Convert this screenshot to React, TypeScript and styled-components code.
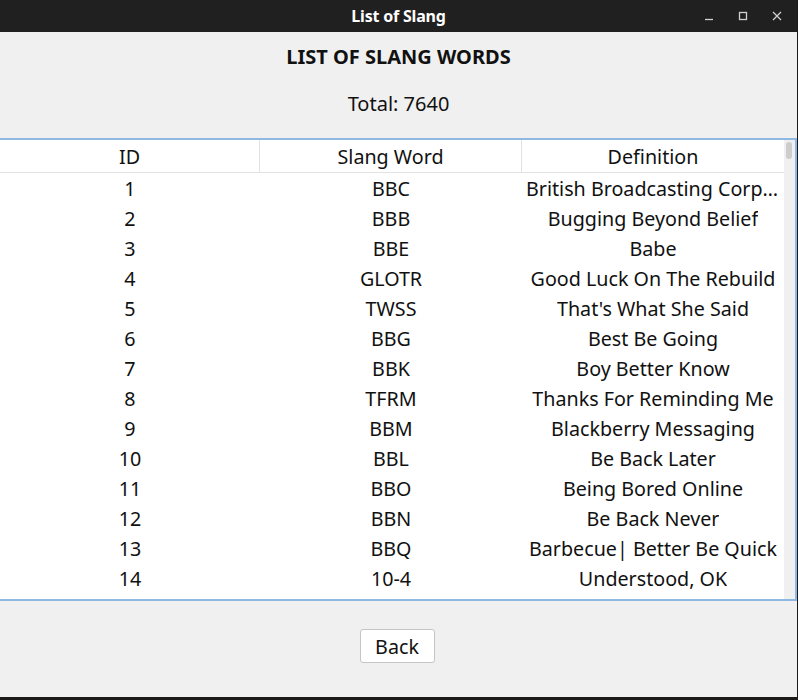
import React from "react";
import styled, { createGlobalStyle } from "styled-components";

const Global = createGlobalStyle`
  html, body { margin: 0; padding: 0; background: #1c1a18; }
  body { font-family: "Noto Sans", "Open Sans", sans-serif; }
`;

const Window = styled.div`
  width: 797px;
  height: 697px;
  display: flex;
  flex-direction: column;
  background: #f0f0f0;
  overflow: hidden;
`;

const TitleBar = styled.div`
  height: 32px;
  flex: none;
  background: #202020;
  display: flex;
  align-items: center;
  justify-content: center;
  position: relative;
`;

const TitleText = styled.div`
  color: #ffffff;
  font-family: "Noto Sans", sans-serif;
  font-weight: 700;
  font-size: 16px;
  letter-spacing: -0.2px;
`;

const Controls = styled.div`
  position: absolute;
  right: 14px;
  top: 0;
  height: 32px;
  display: flex;
  align-items: center;
  gap: 22px;
`;

const Ctl = styled.svg`
  width: 12px;
  height: 12px;
  stroke: #cfcfcf;
  stroke-width: 1.3;
  fill: none;
`;

const Heading = styled.h1`
  margin: 12px 0 0;
  text-align: center;
  font-size: 20px;
  font-weight: 700;
  color: #111;
  line-height: 26px;
`;

const Total = styled.div`
  margin-top: 21px;
  text-align: center;
  font-size: 20px;
  color: #111;
  line-height: 26px;
`;

const Frame = styled.div`
  margin-top: 21px;
  height: 459px;
  border: 2px solid #8fb8e3;
  border-left: none;
  background: #fff;
  display: flex;
  overflow: hidden;
`;

const TableArea = styled.div`
  flex: 1;
  display: flex;
  flex-direction: column;
  overflow: hidden;
`;

const Grid = styled.div<{ $header?: boolean }>`
  display: grid;
  grid-template-columns: 260px 262px 1fr;
  height: ${(p) => (p.$header ? "33px" : "30px")};
  flex: none;
  ${(p) => (p.$header ? "border-bottom: 1px solid #e2e2e2; box-sizing: border-box;" : "")}
`;

const Cell = styled.div<{ $header?: boolean; $last?: boolean }>`
  display: flex;
  align-items: center;
  justify-content: center;
  font-size: 19.7px;
  color: #111;
  white-space: nowrap;
  overflow: hidden;
  ${(p) => (p.$header && !p.$last ? "border-right: 1px solid #e2e2e2;" : "")}
  padding: 0 4px;
  min-width: 0;
`;

const Ellip = styled.span`
  overflow: hidden;
  text-overflow: ellipsis;
  white-space: nowrap;
`;

const ScrollTrack = styled.div`
  width: 11px;
  flex: none;
  background: #f0f0f0;
  position: relative;
`;

const Thumb = styled.div`
  position: absolute;
  left: 2px;
  top: 2px;
  width: 6px;
  height: 17px;
  border-radius: 3px;
  background: #cdcdcd;
`;

const Footer = styled.div`
  flex: 1;
  display: flex;
  justify-content: center;
  align-items: flex-start;
  padding-top: 28px;
`;

const Button = styled.button`
  width: 75px;
  height: 34px;
  background: #fff;
  border: 1px solid #c5c5c5;
  border-radius: 3px;
  font-family: "Noto Sans", sans-serif;
  font-size: 19.7px;
  color: #111;
  padding: 0;
  margin-left: -3px;
`;

const rows: [string, string, string][] = [
  ["1", "BBC", "British Broadcasting Corporation"],
  ["2", "BBB", "Bugging Beyond Belief"],
  ["3", "BBE", "Babe"],
  ["4", "GLOTR", "Good Luck On The Rebuild"],
  ["5", "TWSS", "That's What She Said"],
  ["6", "BBG", "Best Be Going"],
  ["7", "BBK", "Boy Better Know"],
  ["8", "TFRM", "Thanks For Reminding Me"],
  ["9", "BBM", "Blackberry Messaging"],
  ["10", "BBL", "Be Back Later"],
  ["11", "BBO", "Being Bored Online"],
  ["12", "BBN", "Be Back Never"],
  ["13", "BBQ", "Barbecue| Better Be Quick"],
  ["14", "10-4", "Understood, OK"],
];

export default function App() {
  return (
    <>
      <Global />
      <Window>
        <TitleBar>
          <TitleText>List of Slang</TitleText>
          <Controls>
            <Ctl viewBox="0 0 12 12"><path d="M2 9.5h8" /></Ctl>
            <Ctl viewBox="0 0 12 12"><rect x="2.5" y="2.5" width="7" height="7" /></Ctl>
            <Ctl viewBox="0 0 12 12"><path d="M2 2l8 8M10 2l-8 8" /></Ctl>
          </Controls>
        </TitleBar>
        <Heading>LIST OF SLANG WORDS</Heading>
        <Total>Total: 7640</Total>
        <Frame>
          <TableArea>
            <Grid $header>
              <Cell $header>ID</Cell>
              <Cell $header>Slang Word</Cell>
              <Cell $header $last>Definition</Cell>
            </Grid>
            {rows.map((r) => (
              <Grid key={r[0]}>
                <Cell>{r[0]}</Cell>
                <Cell>{r[1]}</Cell>
                <Cell><Ellip>{r[2]}</Ellip></Cell>
              </Grid>
            ))}
          </TableArea>
          <ScrollTrack>
            <Thumb />
          </ScrollTrack>
        </Frame>
        <Footer>
          <Button>Back</Button>
        </Footer>
      </Window>
    </>
  );
}
